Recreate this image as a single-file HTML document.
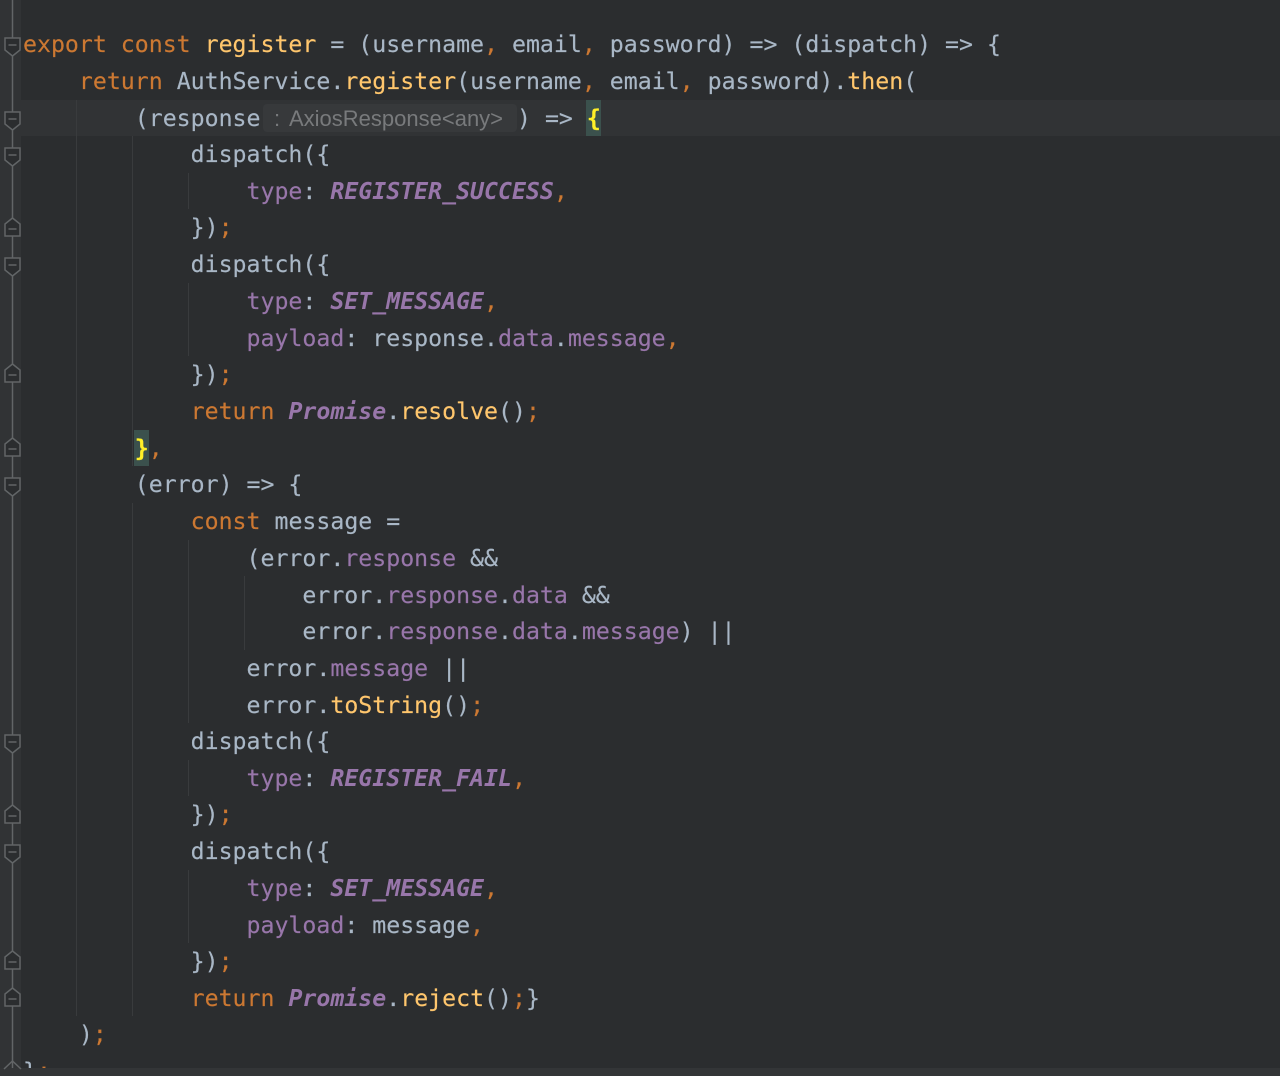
<!DOCTYPE html>
<html><head><meta charset="utf-8">
<style>
html,body{margin:0;padding:0;background:#2b2d2f}
#e{position:relative;width:1280px;height:1076px;overflow:hidden;background:#2b2d2f}
#t{position:absolute;left:0;top:1px;width:1280px;height:1075px}
.l{position:absolute;white-space:pre;font:23.21px/36px "DejaVu Sans Mono","Liberation Mono",monospace;color:#a9b7c6;left:23px;height:36px;-webkit-text-stroke:.15px currentColor}
.k{color:#cc7832}.f{color:#ffc66d}.p{color:#9876aa}
.c{color:#9876aa;font-style:italic;font-weight:bold;-webkit-text-stroke:0}
.b{color:#ffef28;font-weight:bold}
.g{position:absolute;width:1px;background:#393b3d}
svg{position:absolute;left:0;top:0}
</style></head><body><div id="e">
<div style="position:absolute;left:0;top:0;width:21px;height:1076px;background:#313335"></div>
<div style="position:absolute;left:0;top:100px;width:1280px;height:36px;background:#313335"></div>
<div style="position:absolute;left:263px;top:104px;width:254px;height:28px;background:#37393b;border-radius:4px"></div>
<div style="position:absolute;left:586px;top:100px;width:15px;height:36px;background:#3b514d"></div>
<div style="position:absolute;left:134px;top:430px;width:15px;height:36px;background:#3b514d"></div>
<div style="position:absolute;left:0;top:1068px;width:1280px;height:8px;background:#333537"></div>
<div class="g" style="left:76px;top:100px;height:916px"></div>
<div class="g" style="left:132px;top:136px;height:330px"></div>
<div class="g" style="left:132px;top:503px;height:513px"></div>
<div class="g" style="left:188px;top:173px;height:36px"></div>
<div class="g" style="left:188px;top:283px;height:73px"></div>
<div class="g" style="left:188px;top:540px;height:183px"></div>
<div class="g" style="left:188px;top:760px;height:36px"></div>
<div class="g" style="left:188px;top:870px;height:73px"></div>
<div class="g" style="left:244px;top:576px;height:74px"></div>
<svg width="30" height="1076" fill="#2b2d2f" stroke="#626567" stroke-width="1.5">
<path d="M12.500 0V1068" fill="none"/>
<g>
<path d="M5 38H20V50L12.500 56L5 50Z M8.500 45H16.500"/>
<path transform="translate(0,74)" d="M5 38H20V50L12.500 56L5 50Z M8.500 45H16.500"/>
<path transform="translate(0,110)" d="M5 38H20V50L12.500 56L5 50Z M8.500 45H16.500"/>
<path transform="translate(0,220)" d="M5 38H20V50L12.500 56L5 50Z M8.500 45H16.500"/>
<path transform="translate(0,440)" d="M5 38H20V50L12.500 56L5 50Z M8.500 45H16.500"/>
<path transform="translate(0,697)" d="M5 38H20V50L12.500 56L5 50Z M8.500 45H16.500"/>
<path transform="translate(0,807)" d="M5 38H20V50L12.500 56L5 50Z M8.500 45H16.500"/>
</g>
<g>
<path d="M5 236H20V224L12.500 218L5 224Z M8.500 229H16.500"/>
<path transform="translate(0,146)" d="M5 236H20V224L12.500 218L5 224Z M8.500 229H16.500"/>
<path transform="translate(0,220)" d="M5 236H20V224L12.500 218L5 224Z M8.500 229H16.500"/>
<path transform="translate(0,587)" d="M5 236H20V224L12.500 218L5 224Z M8.500 229H16.500"/>
<path transform="translate(0,733)" d="M5 236H20V224L12.500 218L5 224Z M8.500 229H16.500"/>
<path transform="translate(0,770)" d="M5 236H20V224L12.500 218L5 224Z M8.500 229H16.500"/>
</g>
<path d="M4 1069L12.500 1061L21 1069" fill="none"/>
</svg>
<div id="t">
<div class="l" style="top:26px"><span class="k">export const </span><span class="f">register</span> = (username<span class="k">,</span> email<span class="k">,</span> password) =&gt; (dispatch) =&gt; {</div>
<div class="l" style="top:63px">    <span class="k">return </span>AuthService.<span class="f">register</span>(username<span class="k">,</span> email<span class="k">,</span> password).<span class="f">then</span>(</div>
<div class="l" style="top:100px">        (response</div>
<div style="position:absolute;left:274px;top:100px;height:36px;font:22px/36px 'Liberation Sans',sans-serif;color:#787a7c;white-space:pre">:</div>
<div style="position:absolute;left:289px;top:100px;height:36px;font:22px/36px 'Liberation Sans',sans-serif;color:#787a7c;white-space:pre">AxiosResponse&lt;any&gt;</div>
<div class="l" style="top:100px;left:517px">) =&gt; <span class="b">{</span></div>
<div class="l" style="top:136px">            dispatch({</div>
<div class="l" style="top:173px">                <span class="p">type</span>: <span class="c">REGISTER_SUCCESS</span><span class="k">,</span></div>
<div class="l" style="top:209px">            })<span class="k">;</span></div>
<div class="l" style="top:246px">            dispatch({</div>
<div class="l" style="top:283px">                <span class="p">type</span>: <span class="c">SET_MESSAGE</span><span class="k">,</span></div>
<div class="l" style="top:320px">                <span class="p">payload</span>: response.<span class="p">data</span>.<span class="p">message</span><span class="k">,</span></div>
<div class="l" style="top:356px">            })<span class="k">;</span></div>
<div class="l" style="top:393px">            <span class="k">return </span><span class="c">Promise</span>.<span class="f">resolve</span>()<span class="k">;</span></div>
<div class="l" style="top:430px">        <span class="b">}</span><span class="k">,</span></div>
<div class="l" style="top:466px">        (error) =&gt; {</div>
<div class="l" style="top:503px">            <span class="k">const </span>message =</div>
<div class="l" style="top:540px">                (error.<span class="p">response</span> &amp;&amp;</div>
<div class="l" style="top:577px">                    error.<span class="p">response</span>.<span class="p">data</span> &amp;&amp;</div>
<div class="l" style="top:613px">                    error.<span class="p">response</span>.<span class="p">data</span>.<span class="p">message</span>) ||</div>
<div class="l" style="top:650px">                error.<span class="p">message</span> ||</div>
<div class="l" style="top:687px">                error.<span class="f">toString</span>()<span class="k">;</span></div>
<div class="l" style="top:723px">            dispatch({</div>
<div class="l" style="top:760px">                <span class="p">type</span>: <span class="c">REGISTER_FAIL</span><span class="k">,</span></div>
<div class="l" style="top:796px">            })<span class="k">;</span></div>
<div class="l" style="top:833px">            dispatch({</div>
<div class="l" style="top:870px">                <span class="p">type</span>: <span class="c">SET_MESSAGE</span><span class="k">,</span></div>
<div class="l" style="top:907px">                <span class="p">payload</span>: message<span class="k">,</span></div>
<div class="l" style="top:943px">            })<span class="k">;</span></div>
<div class="l" style="top:980px">            <span class="k">return </span><span class="c">Promise</span>.<span class="f">reject</span>()<span class="k">;</span>}</div>
<div class="l" style="top:1016px">    )<span class="k">;</span></div>
<div class="l" style="top:1053px;height:14px;overflow:hidden">}<span class="k">;</span></div>
</div>
</div></body></html>
